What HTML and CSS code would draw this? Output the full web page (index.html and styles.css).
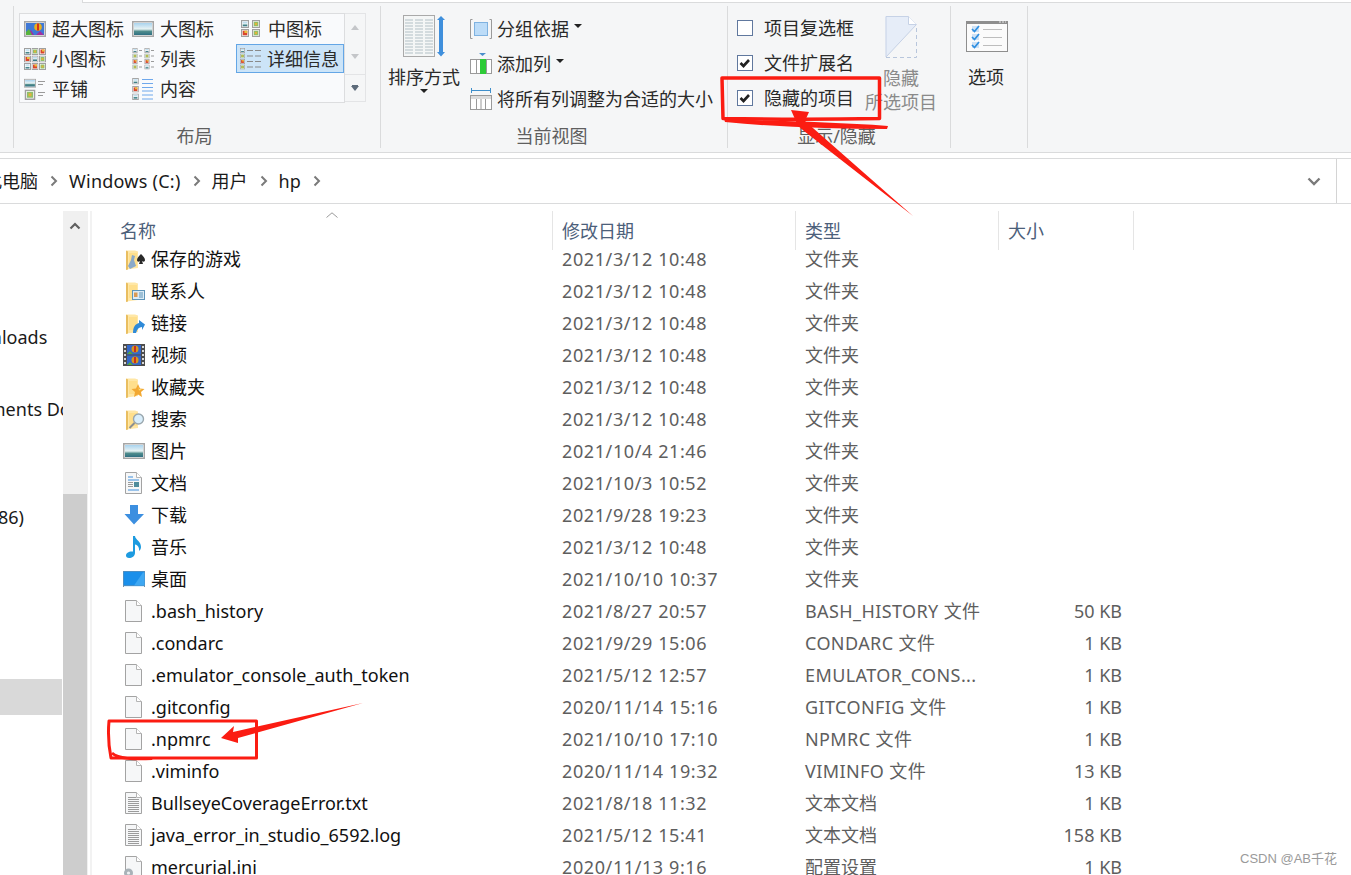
FILE: index.html
```html
<!DOCTYPE html>
<html lang="zh-CN">
  <head>
    <meta charset="UTF-8" />
    <title>hp - 文件资源管理器</title>
    <link rel="stylesheet" href="styles.css">
  </head>

  <body>
    <!-- Shared icons -->
    <svg class="defs" aria-hidden="true">
      <defs>
        <linearGradient id="sky" x1="0" y1="0" x2="0" y2="1">
          <stop offset="0" stop-color="#a9d3ee" />
          <stop offset="0.5" stop-color="#e8f3f4" />
          <stop offset="0.7" stop-color="#4f8c8c" />
          <stop offset="1" stop-color="#2f6f82" />
        </linearGradient>
        <symbol id="pic" viewBox="0 0 22 16">
          <rect x="0.750" y="0.750" width="20.500" height="14.500" fill="#fff" stroke="#a6a6a6" stroke-width="1.500" />
          <rect x="2" y="2" width="18" height="12" fill="url(#sky)" />
        </symbol>
        <symbol id="balloon" viewBox="0 0 22 16">
          <rect x="0.750" y="0.750" width="20.500" height="14.500" fill="#fff" stroke="#a6a6a6" stroke-width="1.500" />
          <rect x="2" y="2" width="18" height="12" fill="#3f78d6" />
          <path d="M2 14l5-5 3 5zM12 14l4-4 4 4z" fill="#a12fa0" />
          <circle cx="14" cy="6" r="3.800" fill="#e8b01c" />
          <path d="M13 2.500v7h2v-7z" fill="#d5301f" />
          <path d="M2 11l3-3 3 6H2z" fill="#57b33e" />
        </symbol>
        <symbol id="tiny" viewBox="0 0 7 7">
          <rect x="0.500" y="0.500" width="6" height="6" fill="#fff" stroke="#a0a0a0" />
          <rect x="1.500" y="1.500" width="4" height="4" fill="url(#sky)" />
        </symbol>
        <symbol id="tiny-red" viewBox="0 0 7 7">
          <rect x="0.500" y="0.500" width="6" height="6" fill="#fff" stroke="#a0a0a0" />
          <rect x="1.500" y="1.500" width="4" height="4" fill="#d8442c" />
          <rect x="3" y="1.500" width="2.500" height="2" fill="#e9c13b" />
        </symbol>
        <symbol id="tiny-green" viewBox="0 0 7 7">
          <rect x="0.500" y="0.500" width="6" height="6" fill="#fff" stroke="#a0a0a0" />
          <rect x="1.500" y="1.500" width="4" height="4" fill="#8ebf6a" />
          <rect x="2.500" y="2.500" width="2" height="2" fill="#e3b33c" />
        </symbol>
        <symbol id="folder" viewBox="0 0 22 22">
          <path d="M3.500 2.500h8.500l3 1V20l-11.500 1.500z" fill="#ffe7a6" />
          <path d="M3 2.500v19.500l2-.5V3.500z" fill="#e9be60" />
          <path d="M6 5h8v13H6z" fill="#ffdf8c" />
        </symbol>
        <symbol id="file" viewBox="0 0 17 22">
          <path d="M0.500 0.500h11l5 5v16h-16z" fill="#f6f7f8" stroke="#a3a3a3" />
          <path d="M11.500 0.500v5h5" fill="#fff" stroke="#b5b5b5" />
        </symbol>
        <symbol id="file-text" viewBox="0 0 17 22">
          <path d="M0.500 0.500h11l5 5v16h-16z" fill="#f6f7f8" stroke="#a3a3a3" />
          <path d="M11.500 0.500v5h5" fill="#fff" stroke="#b5b5b5" />
          <path d="M3 5.500h8M3 7.500h11M3 9.500h11M3 11.500h11M3 13.500h11M3 15.500h11M3 17.500h11M3 19.500h11" stroke="#9b9b9b" />
        </symbol>
      </defs>
    </svg>

    <!-- Ribbon -->
    <div class="ribbon">
      <div class="tab-strip">
        <div class="tab-active"></div>
        <div class="tab-rest"></div>
      </div>
      <div class="groups">
        <section class="group group-layout">
          <div class="layout-row">
            <div class="gallery">
              <div class="gallery-item"><svg class="gicon"><use href="#balloon" /></svg>超大图标</div>
              <div class="gallery-item"><svg class="gicon"><use href="#pic" /></svg>大图标</div>
              <div class="gallery-item">
                <svg class="gicon" viewBox="0 0 22 22">
                  <use href="#tiny" x="0" y="2" width="10" height="8" />
                  <use href="#tiny-green" x="11" y="2" width="10" height="8" />
                  <use href="#tiny-red" x="0" y="11" width="10" height="8" />
                  <use href="#tiny-green" x="11" y="11" width="10" height="8" />
                </svg>中图标
              </div>
              <div class="gallery-item">
                <svg class="gicon" viewBox="0 0 22 22">
                  <use href="#tiny" x="0" y="0" width="7" height="7" />
                  <use href="#tiny-green" x="7.500" y="0" width="7" height="7" />
                  <use href="#tiny-red" x="15" y="0" width="7" height="7" />
                  <use href="#tiny-red" x="0" y="7.500" width="7" height="7" />
                  <use href="#tiny" x="7.500" y="7.500" width="7" height="7" />
                  <use href="#tiny-green" x="15" y="7.500" width="7" height="7" />
                  <use href="#tiny" x="0" y="15" width="7" height="7" />
                  <use href="#tiny-red" x="7.500" y="15" width="7" height="7" />
                  <use href="#tiny-green" x="15" y="15" width="7" height="7" />
                </svg>小图标
              </div>
              <div class="gallery-item">
                <svg class="gicon" viewBox="0 0 22 22">
                  <use href="#tiny" x="0" y="0" width="6" height="5" />
                  <use href="#tiny-green" x="0" y="5.500" width="6" height="5" />
                  <use href="#tiny-red" x="0" y="11" width="6" height="5" />
                  <use href="#tiny-green" x="0" y="16.500" width="6" height="5" />
                  <use href="#tiny" x="12" y="0" width="6" height="5" />
                  <use href="#tiny-green" x="12" y="5.500" width="6" height="5" />
                  <use href="#tiny-red" x="12" y="11" width="6" height="5" />
                  <use href="#tiny" x="12" y="16.500" width="6" height="5" />
                  <path d="M7 2.500h3M7 8h3M7 13.500h3M7 19h3M19 2.500h3M19 8h3M19 13.500h3M19 19h3" stroke="#9a9a9a" />
                </svg>列表
              </div>
              <div class="gallery-item selected">
                <svg class="gicon" viewBox="0 0 22 22">
                  <use href="#tiny" x="0" y="0" width="5" height="5" />
                  <use href="#tiny-green" x="0" y="5.500" width="5" height="5" />
                  <use href="#tiny-red" x="0" y="11" width="5" height="5" />
                  <use href="#tiny-green" x="0" y="16.500" width="5" height="5" />
                  <path d="M7 2.500h6M7 8h6M7 13.500h6M7 19h6M15 2.500h6M15 8h6M15 13.500h6M15 19h6" stroke="#8a8a8a" />
                </svg>详细信息
              </div>
              <div class="gallery-item">
                <svg class="gicon" viewBox="0 0 22 22">
                  <use href="#pic" x="0" y="0" width="12" height="10.500" />
                  <use href="#tiny-green" x="0" y="11.500" width="12" height="10.500" />
                  <path d="M14 3.500h7M14 6.500h5M14 14.500h7M14 17.500h5" stroke="#9a9a9a" />
                </svg>平铺
              </div>
              <div class="gallery-item">
                <svg class="gicon" viewBox="0 0 22 22">
                  <use href="#tiny" x="0" y="0" width="7" height="6.500" />
                  <use href="#tiny-red" x="0" y="8" width="7" height="6.500" />
                  <use href="#tiny" x="0" y="15.500" width="7" height="6.500" />
                  <path d="M10 1.500h11M10 5.500h11M10 9.500h11M10 13h11M10 17h11M10 21h11" stroke="#6fa8ec" />
                </svg>内容
              </div>
            </div>
            <div class="gallery-scroll">
              <span class="tri-up"></span>
              <span class="tri-down"></span>
              <span class="more"><span class="tri-more"></span></span>
            </div>
          </div>
          <div class="group-label">布局</div>
        </section>

        <section class="group group-view">
          <div class="view-row">
            <div class="big-btn sort-btn">
              <svg class="sort-icon" viewBox="0 0 42 42">
                <rect x="0.500" y="0.500" width="31" height="41" fill="#f4f6f6" stroke="#a9a9a9" />
                <path d="M2 5h28M2 8h28M2 11h28M2 14h28M2 17h28M2 20h28M2 23h28M2 26h28M2 29h28M2 32h28M2 35h28M2 38h28" stroke="#c7d2d6" stroke-width="1.500" stroke-dasharray="8 2" />
                <path d="M38 1l4 4h-2v32h2l-4 4.500-4-4.500h2V5h-2z" fill="#3f8fdc" />
              </svg>
              <div>排序方式</div>
              <span class="caret"></span>
            </div>
            <div class="view-list">
              <div class="view-item">
                <svg class="vicon" viewBox="0 0 22 22">
                  <path d="M2.500 1.500h-2v19h2M19.500 1.500h2v19h-2" fill="none" stroke="#9a9a9a" />
                  <rect x="4.500" y="4.500" width="13" height="13" fill="#bcdcf8" stroke="#7fb2e0" />
                </svg>分组依据<span class="caret inline"></span>
              </div>
              <div class="view-item">
                <svg class="vicon" viewBox="0 0 22 22">
                  <path d="M9 0h7l-3.500 3z" fill="#4c8fcb" />
                  <rect x="0.500" y="6.500" width="21" height="14" fill="#fff" stroke="#9a9a9a" />
                  <rect x="10" y="6" width="6" height="15" fill="#2ecb38" />
                  <path d="M6.500 6.500v14M16.500 6.500v14" stroke="#9a9a9a" />
                </svg>添加列<span class="caret inline"></span>
              </div>
              <div class="view-item">
                <svg class="vicon" viewBox="0 0 22 22">
                  <path d="M1.500 0v5M20.500 0v5M2 2.500h18" stroke="#3f8fcb" fill="none" />
                  <rect x="0.500" y="7.500" width="21" height="14" fill="#fff" stroke="#9a9a9a" />
                  <rect x="1" y="8" width="20" height="3" fill="#dcdcdc" />
                  <path d="M6.500 11v10M11 11v10M15.500 11v10" stroke="#9a9a9a" />
                </svg>将所有列调整为合适的大小
              </div>
            </div>
          </div>
          <div class="group-label">当前视图</div>
        </section>

        <section class="group group-show">
          <div class="show-row">
            <div class="check-list">
              <label class="check-item"><span class="check"></span>项目复选框</label>
              <label class="check-item">
                <span class="check"><svg viewBox="0 0 14 14"><path d="M2.500 7l3 3 5.500-6" fill="none" stroke="#222" stroke-width="2.600" /></svg></span>文件扩展名
              </label>
              <label class="check-item">
                <span class="check"><svg viewBox="0 0 14 14"><path d="M2.500 7l3 3 5.500-6" fill="none" stroke="#222" stroke-width="2.600" /></svg></span>隐藏的项目
              </label>
            </div>
            <div class="big-btn hide-btn">
              <svg class="hide-icon" viewBox="0 0 32 42">
                <path d="M1 41L0.500 0.500h23l8 8L1 41z" fill="#e6edf8" />
                <path d="M1 41V0.500h22.500l8 8" fill="none" stroke="#c6d2e6" />
                <path d="M23.500 0.500v8h8" fill="#fff" stroke="#c6d2e6" />
                <path d="M1 41L31 9" stroke="#c6d2e6" />
                <path d="M1 41.500h30.500V9" fill="none" stroke="#b8c6dc" stroke-dasharray="4 3" />
              </svg>
              <div>隐藏</div>
              <div>所选项目</div>
            </div>
          </div>
          <div class="group-label">显示/隐藏</div>
        </section>

        <section class="group group-options">
          <div class="big-btn options-btn">
            <svg class="options-icon" viewBox="0 0 42 31">
              <rect x="0.500" y="0.500" width="41" height="30" fill="#fbfbfb" stroke="#8e8e8e" />
              <rect x="0" y="0" width="42" height="3" fill="#8e8e8e" />
              <path d="M33 1h2M36 1h2M39 1h1" stroke="#e8e8e8" />
              <rect x="6" y="5" width="7" height="6" fill="#cfe2f5" />
              <rect x="6" y="13" width="7" height="6" fill="#cfe2f5" />
              <rect x="6" y="21" width="7" height="6" fill="#cfe2f5" />
              <path d="M6 8l2.500 2.500L13 5M6 16l2.500 2.500L13 13M6 24l2.500 2.500L13 21" fill="none" stroke="#2f8fe0" stroke-width="1.700" />
              <path d="M17 8.500h19M17 16.500h19M17 24.500h19" stroke="#bdbdbd" />
            </svg>
            <div>选项</div>
          </div>
        </section>
      </div>
    </div>

    <!-- Address bar -->
    <div class="address-gap"></div>
    <div class="address">
      <div class="crumbs">
        <span class="crumb first">此电脑</span><svg class="chev" viewBox="0 0 8 12"><path d="M1.500 1.500L6 6l-4.500 4.500" fill="none" stroke="#7a7a7a" stroke-width="2" /></svg>
        <span class="crumb latin">Windows (C:)</span><svg class="chev" viewBox="0 0 8 12"><path d="M1.500 1.500L6 6l-4.500 4.500" fill="none" stroke="#7a7a7a" stroke-width="2" /></svg>
        <span class="crumb">用户</span><svg class="chev" viewBox="0 0 8 12"><path d="M1.500 1.500L6 6l-4.500 4.500" fill="none" stroke="#7a7a7a" stroke-width="2" /></svg>
        <span class="crumb">hp</span><svg class="chev" viewBox="0 0 8 12"><path d="M1.500 1.500L6 6l-4.500 4.500" fill="none" stroke="#7a7a7a" stroke-width="2" /></svg>
      </div>
      <div class="address-drop">
        <svg class="drop-chev" viewBox="0 0 14 9"><path d="M1.500 1.500L7 7l5.500-5.500" fill="none" stroke="#7a7a7a" stroke-width="2.400" /></svg>
      </div>
      <div class="address-end"></div>
    </div>

    <div class="browser">
      <!-- Navigation pane, scrolled sideways -->
      <nav class="nav">
        <div class="nav-item"></div>
        <div class="nav-item"></div>
        <div class="nav-item"></div>
        <div class="nav-item cut-downloads">Downloads</div>
        <div class="nav-item"></div>
        <div class="nav-item cut-documents">Documents Do</div>
        <div class="nav-item"></div>
        <div class="nav-item"></div>
        <div class="nav-item cut-x86">(x86)</div>
        <div class="nav-item"></div>
        <div class="nav-item"></div>
        <div class="nav-item"></div>
        <div class="nav-item"></div>
        <div class="nav-item active"></div>
      </nav>
      <div class="scrollbar">
        <div class="scroll-up">
          <svg class="scroll-chev" viewBox="0 0 12 8"><path d="M1.500 6.500L6 2l4.500 4.500" fill="none" stroke="#606060" stroke-width="2.200" /></svg>
        </div>
        <div class="scroll-thumb"></div>
      </div>
      <div class="pane-line"></div>

      <!-- File list -->
      <main class="files">
        <div class="file-head">
          <div class="head-cell head-name">名称<svg class="sort-mark" viewBox="0 0 12 6"><path d="M0.500 5.500L6 0.800l5.500 4.700" fill="none" stroke="#9a9a9a" /></svg></div>
          <div class="head-cell">修改日期</div>
          <div class="head-cell">类型</div>
          <div class="head-cell">大小</div>
        </div>

        <div class="row">
          <div class="name"><svg class="ico" viewBox="0 0 22 22"><use href="#folder" width="22" height="22" /><path d="M9 7l3 1-1 4 2 6-6 3-2-3 3-6z" fill="#8aa9c9" /><path d="M18 6c2 2 4 4 4 6 0 2-2 2-3 1l1 3h-4l1-3c-1 1-3 1-3-1 0-2 2-4 4-6z" fill="#2a2a2a" /></svg>保存的游戏</div>
          <div class="cell date">2021/3/12 10:48</div><div class="cell">文件夹</div><div class="cell size"></div>
        </div>
        <div class="row">
          <div class="name"><svg class="ico" viewBox="0 0 22 22"><use href="#folder" width="22" height="22" /><rect x="9.500" y="10.500" width="12" height="9" fill="#dcebf5" stroke="#5f95b8" /><rect x="11" y="12.500" width="3.500" height="4.500" fill="#d99a54" /><path d="M16 13h4M16 15h4M16 17h4" stroke="#5f95b8" /></svg>联系人</div>
          <div class="cell date">2021/3/12 10:48</div><div class="cell">文件夹</div><div class="cell size"></div>
        </div>
        <div class="row">
          <div class="name"><svg class="ico" viewBox="0 0 22 22"><use href="#folder" width="22" height="22" /><path d="M10 21c0-6 2-9 6-10V8l6 4.500L19 18v-3c-3 0-5 2-6 6z" fill="#2f8ad8" /></svg>链接</div>
          <div class="cell date">2021/3/12 10:48</div><div class="cell">文件夹</div><div class="cell size"></div>
        </div>
        <div class="row">
          <div class="name"><svg class="ico" viewBox="0 0 22 22"><rect width="22" height="22" fill="#4d4d4d" /><path d="M1 2h2v2H1zM1 6h2v2H1zM1 10h2v2H1zM1 14h2v2H1zM1 18h2v2H1zM19 2h2v2h-2zM19 6h2v2h-2zM19 10h2v2h-2zM19 14h2v2h-2zM19 18h2v2h-2z" fill="#d8d8d8" /><rect x="4" y="1" width="14" height="9.500" fill="#3568c8" /><rect x="4" y="11.500" width="14" height="9.500" fill="#3568c8" /><circle cx="12" cy="5" r="3.500" fill="#d9961d" /><path d="M11 2h2v6h-2z" fill="#c8301f" /><circle cx="12" cy="16" r="3.500" fill="#d9961d" /><path d="M11 13h2v6h-2z" fill="#c8301f" /><path d="M4 10l3-3 3 3zM4 21l3-3 3 3z" fill="#55a83c" /></svg>视频</div>
          <div class="cell date">2021/3/12 10:48</div><div class="cell">文件夹</div><div class="cell size"></div>
        </div>
        <div class="row">
          <div class="name"><svg class="ico" viewBox="0 0 22 22"><use href="#folder" width="22" height="22" /><path d="M15 8l2 4.500 4.500.5-3.500 3 1 5-4-2.500-4 2.500 1-5-3.500-3 4.500-.5z" fill="#f2a832" /><path d="M15 10l1 3 3 .5-3 1z" fill="#ffe27a" /></svg>收藏夹</div>
          <div class="cell date">2021/3/12 10:48</div><div class="cell">文件夹</div><div class="cell size"></div>
        </div>
        <div class="row">
          <div class="name"><svg class="ico" viewBox="0 0 22 22"><use href="#folder" width="22" height="22" /><circle cx="15.500" cy="11" r="5" fill="#d9eefb" stroke="#9aa7ae" stroke-width="1.400" /><path d="M11.500 15l-5 5" stroke="#8b8f92" stroke-width="2" /></svg>搜索</div>
          <div class="cell date">2021/3/12 10:48</div><div class="cell">文件夹</div><div class="cell size"></div>
        </div>
        <div class="row">
          <div class="name"><svg class="ico"><use href="#pic" y="3" width="22" height="16" /></svg>图片</div>
          <div class="cell date">2021/10/4 21:46</div><div class="cell">文件夹</div><div class="cell size"></div>
        </div>
        <div class="row">
          <div class="name"><svg class="ico" viewBox="0 0 22 22"><use href="#file" x="2" width="17" height="22" /><path d="M5 5h5M5 8h11M5 18h11" stroke="#3f8fdc" stroke-width="1.200" /><rect x="11" y="10" width="5" height="5" fill="#4f8c9c" /><path d="M5 10.500h5M5 12.500h5M5 14.500h5" stroke="#9b9b9b" /></svg>文档</div>
          <div class="cell date">2021/10/3 10:52</div><div class="cell">文件夹</div><div class="cell size"></div>
        </div>
        <div class="row">
          <div class="name"><svg class="ico" viewBox="0 0 22 22"><path d="M7 1h8v9h6l-10 10.500L1.500 10H7z" fill="#3c8fe0" /></svg>下载</div>
          <div class="cell date">2021/9/28 19:23</div><div class="cell">文件夹</div><div class="cell size"></div>
        </div>
        <div class="row">
          <div class="name"><svg class="ico" viewBox="0 0 22 22"><path d="M10 0h2c.5 4 6 5 6 11 0 2-1 3-2 4 .5-3-1-6-4-6.500V17c0 3-3 5-6 5-2 0-3-1-3-2.500C3 17 6 15 10 15.500z" fill="#1d9be0" /></svg>音乐</div>
          <div class="cell date">2021/3/12 10:48</div><div class="cell">文件夹</div><div class="cell size"></div>
        </div>
        <div class="row">
          <div class="name"><svg class="ico" viewBox="0 0 22 22"><rect x="0" y="3" width="22" height="16" fill="#7d8fa0" /><rect x="0.500" y="3.500" width="21" height="14" fill="#1a8fea" /><path d="M11 17.500L20 4.500h1.500v13z" fill="#3ea7f2" /><path d="M1 18.500h20" stroke="#dfeffb" /></svg>桌面</div>
          <div class="cell date">2021/10/10 10:37</div><div class="cell">文件夹</div><div class="cell size"></div>
        </div>
        <div class="row">
          <div class="name"><svg class="ico"><use href="#file" x="2" width="17" height="22" /></svg>.bash_history</div>
          <div class="cell date">2021/8/27 20:57</div><div class="cell latin">BASH_HISTORY 文件</div><div class="cell size">50 KB</div>
        </div>
        <div class="row">
          <div class="name"><svg class="ico"><use href="#file" x="2" width="17" height="22" /></svg>.condarc</div>
          <div class="cell date">2021/9/29 15:06</div><div class="cell latin">CONDARC 文件</div><div class="cell size">1 KB</div>
        </div>
        <div class="row">
          <div class="name"><svg class="ico"><use href="#file" x="2" width="17" height="22" /></svg>.emulator_console_auth_token</div>
          <div class="cell date">2021/5/12 12:57</div><div class="cell latin">EMULATOR_CONS...</div><div class="cell size">1 KB</div>
        </div>
        <div class="row">
          <div class="name"><svg class="ico"><use href="#file" x="2" width="17" height="22" /></svg>.gitconfig</div>
          <div class="cell date">2020/11/14 15:16</div><div class="cell latin">GITCONFIG 文件</div><div class="cell size">1 KB</div>
        </div>
        <div class="row">
          <div class="name"><svg class="ico"><use href="#file" x="2" width="17" height="22" /></svg>.npmrc</div>
          <div class="cell date">2021/10/10 17:10</div><div class="cell latin">NPMRC 文件</div><div class="cell size">1 KB</div>
        </div>
        <div class="row">
          <div class="name"><svg class="ico"><use href="#file" x="2" width="17" height="22" /></svg>.viminfo</div>
          <div class="cell date">2020/11/14 19:32</div><div class="cell latin">VIMINFO 文件</div><div class="cell size">13 KB</div>
        </div>
        <div class="row">
          <div class="name"><svg class="ico"><use href="#file-text" x="2" width="17" height="22" /></svg>BullseyeCoverageError.txt</div>
          <div class="cell date">2021/8/18 11:32</div><div class="cell">文本文档</div><div class="cell size">1 KB</div>
        </div>
        <div class="row">
          <div class="name"><svg class="ico"><use href="#file-text" x="2" width="17" height="22" /></svg>java_error_in_studio_6592.log</div>
          <div class="cell date">2021/5/12 15:41</div><div class="cell">文本文档</div><div class="cell size">158 KB</div>
        </div>
        <div class="row">
          <div class="name"><svg class="ico" viewBox="0 0 22 22"><use href="#file" x="2" width="17" height="22" /><circle cx="5.500" cy="17" r="4.500" fill="#a9b2b8" /><circle cx="5.500" cy="17" r="1.600" fill="#eef1f3" /></svg>mercurial.ini</div>
          <div class="cell date">2020/11/13 9:16</div><div class="cell">配置设置</div><div class="cell size">1 KB</div>
        </div>
      </main>
    </div>

    <!-- Red marks drawn over the screenshot -->
    <svg class="marks" viewBox="0 0 1351 875" aria-hidden="true">
      <path d="M722 78h157.500v40.500c-50 1-105 1-156.500 0z" fill="none" stroke="#fb1c12" stroke-width="3.500" stroke-linejoin="round" />
      <path d="M724 119c50 2 110 3 164 7l-1 3c-54 0-110-2-162-7z" fill="#fb1c12" />
      <path d="M791 110l18 2-4 9 108 95-109-85-6-5z" fill="#fb1c12" />
      <path d="M109 721h147.500v37H111c-2-10-3-26-2-37z" fill="none" stroke="#fb1c12" stroke-width="3" stroke-linejoin="round" />
      <path d="M113 752c5 5 20 6 40 6l-1 2c-20 1-35 0-41-6z" fill="#fb1c12" />
      <path d="M221 738l13-12-1 6 130-29-125 35 0 5z" fill="#fb1c12" />
    </svg>

    <div class="watermark">CSDN @AB千花</div>
  </body>
</html>
```

FILE: styles.css
```css
html,
body {
  margin: 0;
  height: 100%;
}

body {
  position: relative;
  width: 1351px;
  height: 875px;
  overflow: hidden;
  background: #fff;
  color: #1a1a1a;
  font-family: "Noto Sans", "Noto Sans CJK SC", sans-serif;
  font-size: 18px;
  line-height: 24px;
}

.defs {
  position: absolute;
  width: 0;
  height: 0;
}

.latin {
  letter-spacing: 0.4px;
}

/* Ribbon */
.ribbon {
  height: 153px;
  box-sizing: border-box;
  background: #f5f6f7;
  border-bottom: 1px solid #dadbdc;
}

.tab-strip {
  display: flex;
  height: 3px;
}

.tab-active {
  width: 83px;
  box-sizing: border-box;
  border-right: 1px solid #dadbdc;
}

.tab-rest {
  flex: 1;
  background: #fff;
  border-bottom: 1px solid #dadbdc;
}

.groups {
  display: flex;
  height: 142px;
  margin-top: 3px;
  padding-left: 13px;
}

.group {
  display: flex;
  flex-direction: column;
  box-sizing: border-box;
  border-right: 1px solid #dadbdc;
}

.group-layout {
  width: 368px;
  border-left: 1px solid #dadbdc;
}

.group-view {
  width: 347px;
}

.group-show {
  width: 223px;
}

.group-options {
  width: 77px;
}

.group-label {
  margin-top: auto;
  padding-right: 5px;
  text-align: center;
  color: #5f5f5f;
  height: 24px;
}

/* Layout gallery */
.layout-row {
  display: flex;
  margin: 7px 0 0 5px;
}

.gallery {
  display: grid;
  grid-template-columns: repeat(3, 108px);
  grid-auto-rows: 30px;
  width: 326px;
  height: 90px;
  box-sizing: border-box;
  background: #f9fafc;
  border: 1px solid #dcdddf;
  font-size: 18px;
}

.gallery-item {
  display: flex;
  align-items: center;
  gap: 6px;
  padding-left: 4px;
  height: 29px;
  white-space: nowrap;
  color: #2a2a2a;
}

.gallery-item.selected {
  box-sizing: border-box;
  width: 108px;
  gap: 5px;
  padding-left: 3px;
  background: #cce4f8;
  border: 1px solid #64a6e6;
}

.gicon {
  flex: none;
  width: 22px;
  height: 22px;
}

.gallery-scroll {
  display: flex;
  flex-direction: column;
  align-items: center;
  width: 21px;
  height: 89px;
  box-sizing: border-box;
  border: 1px solid #e3e4e6;
  border-left: none;
}

.tri-up,
.tri-down,
.tri-more {
  width: 0;
  height: 0;
  border-left: 4px solid transparent;
  border-right: 4px solid transparent;
}

.tri-up {
  margin-top: 11px;
  border-bottom: 5px solid #c4c6c9;
}

.tri-down {
  margin-top: 24px;
  border-top: 5px solid #c4c6c9;
}

.more {
  display: block;
  width: 100%;
  margin-top: 15px;
  padding-top: 11px;
  height: 30px;
  box-sizing: border-box;
  border-top: 1px solid #e3e4e6;
  text-align: center;
}

.tri-more {
  display: inline-block;
  vertical-align: top;
  border-top: 5px solid #5d6b7a;
  box-shadow: 0 -2px 0 -1px #5d6b7a;
}

/* Current view */
.view-row {
  display: flex;
}

.big-btn {
  display: flex;
  flex-direction: column;
  align-items: center;
  width: 72px;
  color: #2a2a2a;
}

.sort-btn {
  margin-left: 7px;
  padding-top: 9px;
}

.sort-icon {
  width: 42px;
  height: 42px;
  margin-bottom: 8px;
}

.caret {
  width: 0;
  height: 0;
  border-left: 4px solid transparent;
  border-right: 4px solid transparent;
  border-top: 4px solid #222;
}

.caret.inline {
  margin: 0 0 5px 0;
}

.view-list {
  display: flex;
  flex-direction: column;
  margin: 5px 0 0 10px;
}

.view-item {
  display: flex;
  align-items: center;
  gap: 5px;
  height: 35px;
  white-space: nowrap;
  color: #2a2a2a;
}

.vicon {
  flex: none;
  width: 22px;
  height: 22px;
}

/* Show / hide */
.show-row {
  display: flex;
}

.check-list {
  display: flex;
  flex-direction: column;
  width: 128px;
  margin: 4px 0 0 9px;
}

.check-item {
  display: flex;
  align-items: center;
  gap: 11px;
  height: 35px;
  white-space: nowrap;
  color: #2a2a2a;
}

.check {
  flex: none;
  width: 16px;
  height: 16px;
  box-sizing: border-box;
  background: #fff;
  border: 1px solid #60789e;
}

.check svg {
  display: block;
  width: 14px;
  height: 14px;
}

.hide-btn {
  padding-top: 10px;
  color: #8a8a8a;
}

.hide-icon {
  width: 32px;
  height: 42px;
  margin-bottom: 8px;
}

/* Options */
.options-btn {
  align-items: flex-start;
  margin-left: 15px;
  padding-top: 15px;
}

.options-icon {
  width: 42px;
  height: 31px;
  margin-bottom: 13px;
}

.options-btn div {
  margin-left: 2px;
}

/* Address bar */
.address-gap {
  height: 6px;
  box-sizing: border-box;
  border-bottom: 1px solid #dadbdc;
}

.address {
  display: flex;
  align-items: center;
  height: 45px;
  box-sizing: border-box;
  border-bottom: 1px solid #dadbdc;
}

.crumbs {
  display: flex;
  align-items: center;
  flex: 1;
  white-space: nowrap;
}

.crumb.first {
  margin-left: -16px;
}

.crumb.latin {
  letter-spacing: 0.25px;
}

.chev {
  flex: none;
  width: 8px;
  height: 12px;
  margin: 0 11px 0 12px;
}

.address-drop {
  display: flex;
  justify-content: center;
  width: 44px;
}

.drop-chev {
  width: 14px;
  height: 9px;
}

.address-end {
  align-self: stretch;
  width: 14px;
  border-left: 1px solid #d4d4d4;
}

/* Browser */
.browser {
  display: flex;
  height: 671px;
  overflow: hidden;
}

.nav {
  flex: none;
  width: 63px;
  padding-top: 7px;
  overflow: hidden;
  box-sizing: border-box;
}

.nav-item {
  height: 36px;
  line-height: 36px;
  white-space: nowrap;
  overflow: hidden;
}

.nav-item.active {
  width: 62px;
  background: #d9d9d9;
}

.cut-downloads {
  text-indent: -47px;
}

.cut-documents {
  text-indent: -55px;
}

.cut-x86 {
  text-indent: -17px;
}

.scrollbar {
  flex: none;
  display: flex;
  flex-direction: column;
  width: 25px;
  margin-top: 7px;
  background: #f0f0f0;
}

.scroll-up {
  display: flex;
  justify-content: center;
  padding: 11px 1px 0 0;
}

.scroll-chev {
  width: 12px;
  height: 8px;
}

.scroll-thumb {
  width: 24px;
  height: 381px;
  margin-top: auto;
  background: #cdcdcd;
}

.pane-line {
  flex: none;
  width: 2px;
  margin: 7px 0 0 2px;
  background: #f2f2f2;
}

/* File list */
.files {
  flex: 1;
  padding-top: 7px;
}

.file-head {
  display: grid;
  grid-template-columns: 460px 243px 203px 135px;
  height: 39px;
  margin-bottom: -7px;
  margin-left: 1px;
}

.head-cell {
  position: relative;
  box-sizing: border-box;
  padding: 8px 0 0 9px;
  border-right: 1px solid #e5e5e5;
  color: #4c607a;
}

.head-name {
  padding-left: 27px;
}

.sort-mark {
  position: absolute;
  left: 233px;
  top: 1px;
  width: 12px;
  height: 6px;
}

.row {
  display: grid;
  grid-template-columns: 461px 243px 203px 135px;
  height: 32px;
  line-height: 32px;
  white-space: nowrap;
}

.name {
  display: flex;
  align-items: center;
  gap: 6px;
  padding-left: 31px;
  color: #111;
}

.ico {
  flex: none;
  width: 22px;
  height: 22px;
  overflow: visible;
}

.cell {
  padding-left: 9px;
  color: #5e5e5e;
}

.cell.date {
  letter-spacing: 0.6px;
}

.cell.size {
  padding: 0 12px 0 0;
  text-align: right;
}

/* Annotations */
.marks {
  position: absolute;
  left: 0;
  top: 0;
  width: 1351px;
  height: 875px;
  pointer-events: none;
}

.watermark {
  position: absolute;
  right: 14px;
  bottom: 7px;
  color: #9a9a9a;
  font-family: "Liberation Sans", "Noto Sans CJK SC", sans-serif;
  font-size: 13px;
  line-height: 18px;
}
```
